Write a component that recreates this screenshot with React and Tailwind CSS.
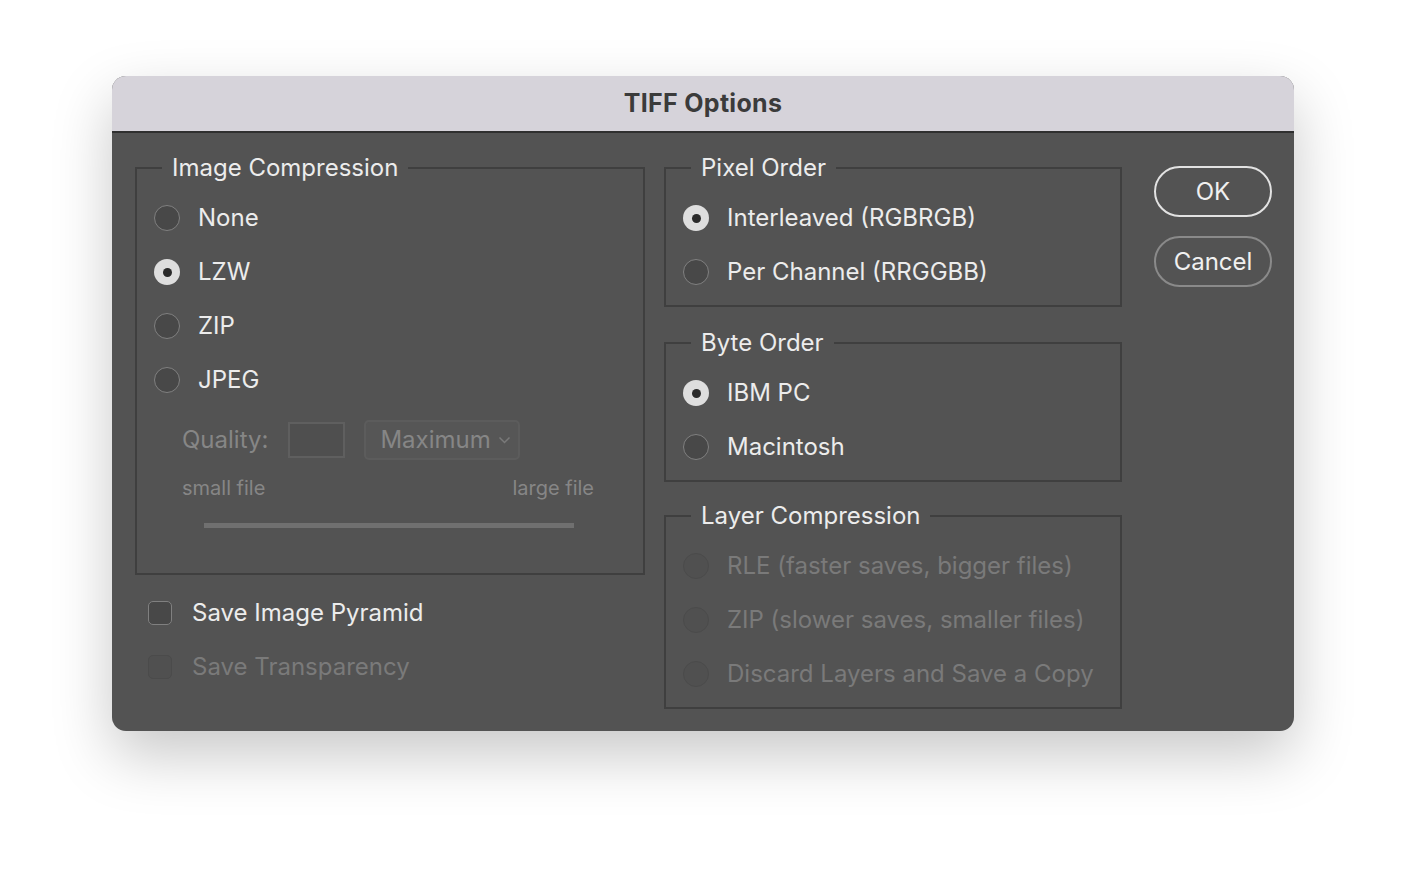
import React from "react";

const Radio = ({ checked, disabled }) => {
  if (checked) {
    return (
      <span className="flex h-[26px] w-[26px] shrink-0 items-center justify-center rounded-full bg-[#dedede]">
        <span className="h-[9px] w-[9px] rounded-full bg-[#2a2a2a]" />
      </span>
    );
  }
  return (
    <span
      className={
        disabled
          ? "h-[26px] w-[26px] shrink-0 rounded-full border-[1.5px] border-[#4b4b4b] bg-[#505050]"
          : "h-[26px] w-[26px] shrink-0 rounded-full border-[1.5px] border-[#808080] bg-[#484848]"
      }
    />
  );
};

const RadioRow = ({ label, checked, disabled }) => (
  <div className="flex h-[54px] items-center gap-[18px]">
    <Radio checked={checked} disabled={disabled} />
    <span className={disabled ? "text-[#7a7a7a]" : "text-[#ececec]"}>{label}</span>
  </div>
);

const Group = ({ title, children, className = "" }) => (
  <fieldset className={"border-2 border-[#3f3f3f] px-[17px] " + className}>
    <legend className="ml-[8px] px-[10px] leading-[30px] text-[#ececec]">{title}</legend>
    {children}
  </fieldset>
);

const CheckRow = ({ label, disabled }) => (
  <div className="flex h-[54px] items-center gap-[20px] pl-[13px]">
    <span
      className={
        disabled
          ? "h-[24px] w-[24px] rounded-[5px] border-[1.5px] border-[#4b4b4b] bg-[#505050]"
          : "h-[24px] w-[24px] rounded-[5px] border-[1.5px] border-[#808080] bg-[#484848]"
      }
    />
    <span className={disabled ? "text-[#7a7a7a]" : "text-[#ececec]"}>{label}</span>
  </div>
);

export default function App() {
  return (
    <div className="min-h-[880px] bg-white pl-[112px] pt-[76px] font-['Inter','Liberation_Sans',sans-serif] text-[24px]">
      <div className="w-[1182px] overflow-hidden rounded-[14px] bg-[#535353] shadow-[0_24px_60px_rgba(0,0,0,0.22)]">
        {/* Title bar */}
        <div className="flex h-[57px] items-center justify-center border-b-2 border-[#2f2f2f] bg-[#d6d3da]">
          <span className="text-[25px] font-bold tracking-[0.3px] text-[#3b3b3b]">TIFF Options</span>
        </div>

        <div className="flex pb-[22px] pl-[23px] pr-[22px] pt-[20px]">
          {/* Left column */}
          <div className="flex w-[510px] flex-col">
            <Group title="Image Compression" className="h-[422px] pt-[8px]">
              <RadioRow label="None" />
              <RadioRow label="LZW" checked />
              <RadioRow label="ZIP" />
              <RadioRow label="JPEG" />
              <div className="mt-[13px] flex h-[40px] items-center pl-[28px] text-[#868686]">
                <span>Quality:</span>
                <span className="ml-[20px] h-[36px] w-[57px] border-2 border-[#5f5f5f] bg-[#4f4f4f]" />
                <span className="ml-[19px] flex h-[40px] w-[156px] items-center justify-between rounded-[5px] border-2 border-[#5c5c5c] bg-[#565656] pl-[14px] pr-[7px]">
                  Maximum
                  <svg width="13" height="8" viewBox="0 0 13 8" fill="none">
                    <path d="M1.5 1.5 6.5 6.5l5-5" stroke="#7a7a7a" strokeWidth="1.5" />
                  </svg>
                </span>
              </div>
              <div className="mt-[13px] flex justify-between pl-[28px] pr-[32px] text-[20px] text-[#868686]">
                <span>small file</span>
                <span>large file</span>
              </div>
              <div className="ml-[50px] mt-[20px] h-[5px] w-[370px] bg-[#707070]" />
            </Group>
            <div className="mt-[11px]">
              <CheckRow label="Save Image Pyramid" />
              <CheckRow label="Save Transparency" disabled />
            </div>
          </div>

          {/* Right column */}
          <div className="ml-[19px] flex w-[458px] flex-col">
            <Group title="Pixel Order" className="pb-[6px] pt-[8px]">
              <RadioRow label="Interleaved (RGBRGB)" checked />
              <RadioRow label="Per Channel (RRGGBB)" />
            </Group>
            <Group title="Byte Order" className="mt-[21px] pb-[6px] pt-[8px]">
              <RadioRow label="IBM PC" checked />
              <RadioRow label="Macintosh" />
            </Group>
            <Group title="Layer Compression" className="mt-[19px] pb-[6px] pt-[8px]">
              <RadioRow label="RLE (faster saves, bigger files)" disabled />
              <RadioRow label="ZIP (slower saves, smaller files)" disabled />
              <RadioRow label="Discard Layers and Save a Copy" disabled />
            </Group>
          </div>

          {/* Buttons */}
          <div className="ml-auto flex w-[118px] flex-col gap-[19px] pt-[13px]">
            <button className="h-[51px] rounded-full border-2 border-[#e2e2e2] text-[#f0f0f0]">OK</button>
            <button className="h-[51px] rounded-full border-2 border-[#8a8a8a] text-[#f0f0f0]">Cancel</button>
          </div>
        </div>
      </div>
    </div>
  );
}
